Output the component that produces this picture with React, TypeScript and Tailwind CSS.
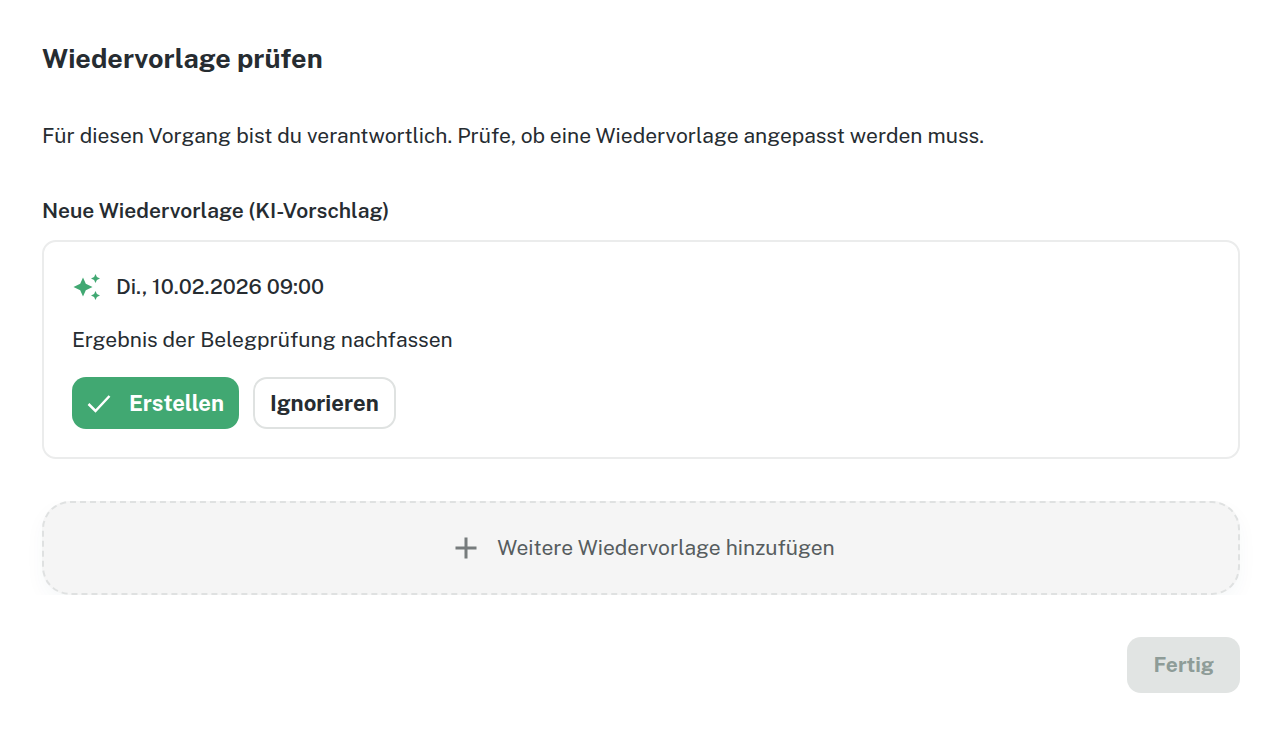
import React, { useState } from "react";

const SparklesIcon = () => (
  <svg viewBox="0 0 28 28" className="h-7 w-7 shrink-0 fill-[#41a872]" aria-hidden="true">
    <path d="M11 4.500 L13.800 10.700 L20.500 14 L13.800 17.300 L11 23.500 L8.200 17.300 L1.500 14 L8.200 10.700Z" />
    <path d="M23.500 1 L24.900 4.100 L28 5.500 L24.900 6.900 L23.500 10 L22.100 6.900 L19 5.500 L22.100 4.100Z" />
    <path d="M23.500 18 L24.900 21.100 L28 22.500 L24.900 23.900 L23.500 27 L22.100 23.900 L19 22.500 L22.100 21.100Z" />
  </svg>
);

const CheckIcon = () => (
  <svg viewBox="0 0 24 24" className="h-6 w-6 shrink-0" fill="none" stroke="currentColor" strokeWidth="2.5" aria-hidden="true">
    <path d="M1.500 13 8.500 20 22.500 5" />
  </svg>
);

const PlusIcon = () => (
  <svg viewBox="0 0 22 22" className="h-[22px] w-[22px] shrink-0" fill="none" stroke="#777c7d" strokeWidth="3" aria-hidden="true">
    <path d="M11 0.500V21.500M0.500 11H21.500" />
  </svg>
);

const App = () => {
  const [done, setDone] = useState(false);

  return (
    <main className="min-h-screen bg-white pt-10 pr-[46px] pb-[50px] pl-[42px] font-['Public_Sans','Inter',sans-serif] text-[21px] text-[#262c31]">
      <h1 className="text-[27px] leading-9 font-bold">Wiedervorlage prüfen</h1>
      <p className="mt-11 leading-8">
        Für diesen Vorgang bist du verantwortlich. Prüfe, ob eine Wiedervorlage angepasst werden muss.
      </p>

      <h2 className="mt-11 leading-[30px] font-semibold">Neue Wiedervorlage (KI-Vorschlag)</h2>
      <section className="mt-[14px] rounded-[14px] border-2 border-[#ebecec] p-7">
        <div className="flex items-center gap-4 leading-[34px] font-medium">
          <SparklesIcon />
          <span>Di., 10.02.2026 09:00</span>
        </div>
        <p className="mt-5 leading-8">Ergebnis der Belegprüfung nachfassen</p>
        <div className="mt-[21px] flex gap-[14px] text-[22px] font-bold">
          <button
            type="button"
            onClick={() => setDone(true)}
            className="flex h-[52px] items-center gap-[18px] rounded-[14px] bg-[#41a872] px-[15px] text-white"
          >
            <CheckIcon />
            Erstellen
          </button>
          <button
            type="button"
            onClick={() => setDone(true)}
            className="h-[52px] rounded-[14px] border-2 border-[#dfe2e1] bg-white px-[15px]"
          >
            Ignorieren
          </button>
        </div>
      </section>

      <div className="-mx-4 mt-[42px] overflow-hidden px-4">
        <button
          type="button"
          className="flex h-[94px] w-full items-center justify-center gap-5 rounded-[28px] border-2 border-dashed border-[#dfe1e1] bg-[#f5f5f5] pl-2 text-[#575d5f] shadow-[0_8px_20px_rgba(38,70,90,0.04)]"
        >
          <PlusIcon />
          Weitere Wiedervorlage hinzufügen
        </button>
      </div>

      <div className="mt-[42px] flex justify-end">
        <button
          type="button"
          disabled={!done}
          className="h-14 rounded-[14px] bg-[#e1e4e3] px-[26px] font-bold text-[#8e9c98]"
        >
          Fertig
        </button>
      </div>
    </main>
  );
};

export default App;
